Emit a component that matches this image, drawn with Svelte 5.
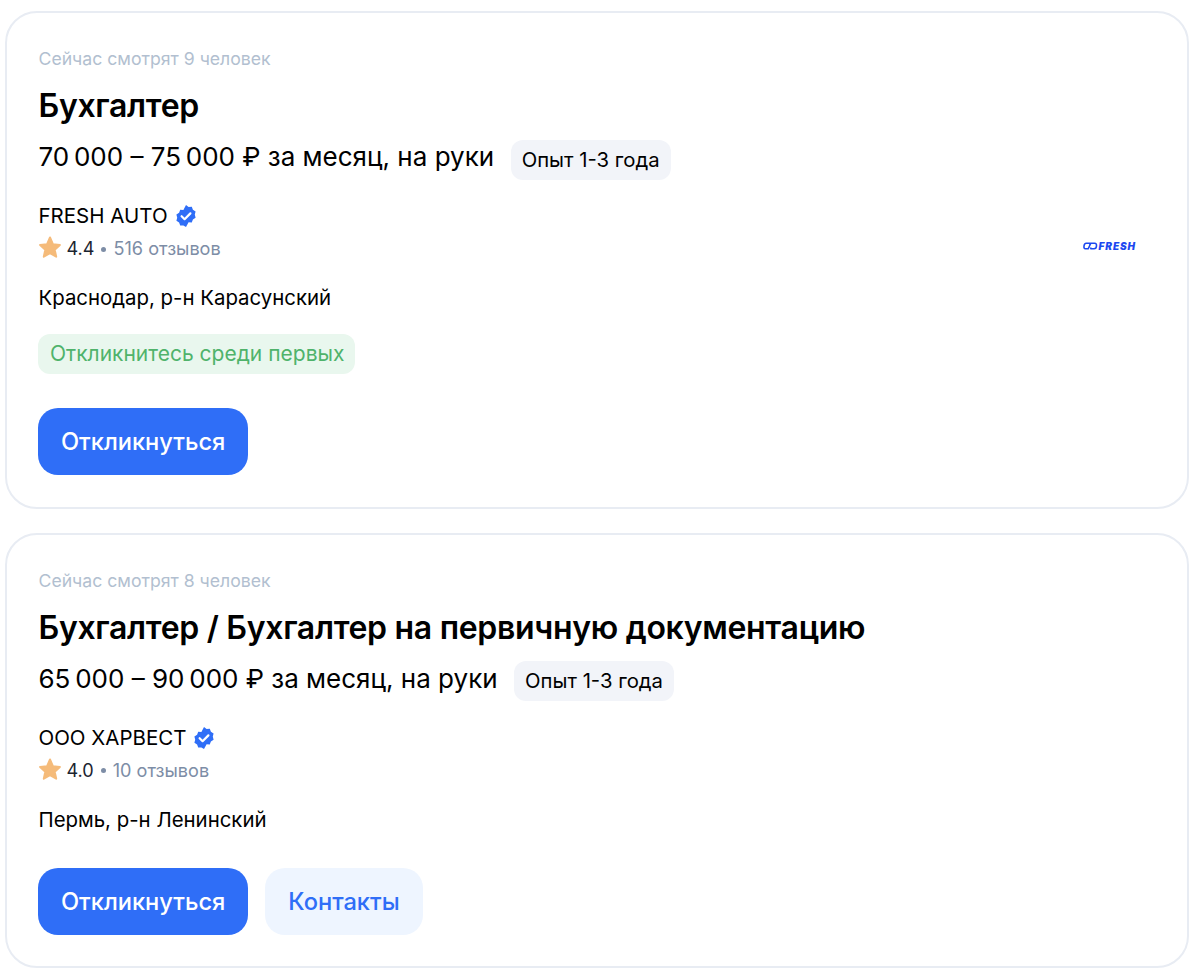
<script lang="ts">
  const vacancies = [
    {
      watching: "Сейчас смотрят 9 человек",
      title: "Бухгалтер",
      salary: "70\u2009000 – 75\u2009000 ₽ за месяц, на руки",
      company: "FRESH AUTO",
      rating: "4.4",
      reviews: "516 отзывов",
      city: "Краснодар, р-н Карасунский",
      first: true,
      logo: true,
      contacts: false,
    },
    {
      watching: "Сейчас смотрят 8 человек",
      title: "Бухгалтер / Бухгалтер на первичную документацию",
      salary: "65\u2009000 – 90\u2009000 ₽ за месяц, на руки",
      company: "ООО ХАРВЕСТ",
      rating: "4.0",
      reviews: "10 отзывов",
      city: "Пермь, р-н Ленинский",
      first: false,
      logo: false,
      contacts: true,
    },
  ];
</script>

<div class="list">
  {#each vacancies as v}
    <article class="card">
      <p class="watching">{v.watching}</p>
      <h2>{v.title}</h2>
      <div class="salary-row">
        <span class="salary">{v.salary}</span>
        <span class="exp">Опыт 1-3 года</span>
      </div>
      <div class="company-row">
        <div>
          <div class="company">
            <span>{v.company}</span>
            <svg class="badge" viewBox="0 0 24 24" width="24" height="24">
              <path
                fill="#2f6ef7"
                d="M12 1l2.6 1.9 3.2-.2 1.1 3 2.7 1.8-.8 3.1.8 3.1-2.7 1.8-1.1 3-3.2-.2L12 23l-2.6-1.6-3.2.2-1.1-3-2.7-1.8.8-3.1-.8-3.1 2.7-1.8 1.1-3 3.2.2z"
              />
              <path
                d="M7.6 12.2l3 3 5.8-5.8"
                fill="none"
                stroke="#fff"
                stroke-width="2.2"
                stroke-linecap="round"
                stroke-linejoin="round"
              />
            </svg>
          </div>
          <div class="rating">
            <svg class="star" viewBox="0 0 24 24" width="24" height="24">
              <path
                fill="#f5bb7a"
                stroke="#f5bb7a"
                stroke-width="2"
                stroke-linejoin="round"
                d="M12 1.500l2.900 6.700 7 .8-5.200 4.700 1.500 7L12 17.200l-6.200 3.500 1.500-7L2.100 9l7-.8z"
              />
            </svg>
            <span class="score">{v.rating}</span>
            <span class="dot"></span>
            <span class="reviews">{v.reviews}</span>
          </div>
        </div>
        {#if v.logo}
          <div class="logo">
            <svg viewBox="0 0 15 8" width="15" height="8">
              <path
                d="M7 2.500 6.500 1.200H3.200Q1.300 1.200 1 4T2.400 6.800H5.200L7.800 1.200H11.600Q13.700 1.200 13.500 4T11 6.800H8L7.500 5.500"
                fill="none"
                stroke="#1c48f0"
                stroke-width="1.600"
              />
            </svg>
            <span>FRESH</span>
          </div>
        {/if}
      </div>
      <p class="city">{v.city}</p>
      {#if v.first}
        <span class="first">Откликнитесь среди первых</span>
      {/if}
      <div class="actions">
        <button class="primary">Откликнуться</button>
        {#if v.contacts}
          <button class="secondary">Контакты</button>
        {/if}
      </div>
    </article>
  {/each}
</div>

<style>
  :global(body) {
    background: #fff;
  }

  .list {
    display: flex;
    flex-direction: column;
    gap: 24px;
    padding: 11px 11px 0 5px;
    font-family: Inter, "Noto Sans", sans-serif;
    color: #000;
  }

  .card {
    display: flex;
    flex-direction: column;
    align-items: flex-start;
    padding: 34px 31px 31.500px 31.500px;
    border: 2px solid #e8ecf3;
    border-radius: 32px;
  }

  p,
  h2 {
    margin: 0;
  }

  .watching {
    font-size: 17.650px;
    line-height: 24px;
    color: #b2bfd0;
  }

  h2 {
    margin-top: 15px;
    font-size: 32px;
    line-height: 40px;
    font-weight: 600;
    letter-spacing: -0.3px;
  }

  .salary-row {
    display: flex;
    align-items: center;
    gap: 16.500px;
    margin-top: 13.500px;
  }

  .salary {
    padding-bottom: 5px;
    font-size: 26px;
    line-height: 32px;
  }

  .exp {
    padding: 8px 11px;
    border-radius: 12px;
    background: #f2f4f9;
    font-size: 20.300px;
    line-height: 24px;
  }

  .company-row {
    align-self: stretch;
    display: flex;
    justify-content: space-between;
    align-items: flex-end;
    margin-top: 21.500px;
  }

  .company {
    display: flex;
    align-items: center;
    gap: 6px;
    font-size: 20.500px;
    line-height: 30px;
  }

  .rating {
    display: flex;
    align-items: center;
    margin-top: 3px;
    margin-left: -1px;
    height: 28px;
    font-size: 18.100px;
  }

  .star {
    margin-right: 5px;
  }

  .score {
    color: #1b2430;
  }

  .dot {
    width: 5px;
    height: 5px;
    margin: 2px 7px 0;
    border-radius: 50%;
    background: #7d8da6;
  }

  .reviews {
    color: #7d8da6;
  }

  .logo {
    display: flex;
    align-items: center;
    gap: 1px;
    margin: 0 20px 11px 0;
    color: #1c48f0;
    font-size: 10px;
    line-height: 10px;
    font-weight: 900;
    font-style: italic;
    letter-spacing: 0.9px;
  }

  .city {
    margin-top: 21px;
    font-size: 20.400px;
    line-height: 30px;
  }

  .first {
    margin: 21px 0 1px -0.500px;
    padding: 7px 10.500px 7px 12px;
    border-radius: 12px;
    background: #e9f7ee;
    color: #4fb36b;
    font-size: 21px;
    line-height: 26px;
  }

  .actions {
    display: flex;
    gap: 17px;
    margin-top: 33px;
    margin-left: -0.500px;
  }

  button {
    height: 67px;
    padding: 0 23px;
    border: none;
    border-radius: 20px;
    font: 500 23.650px Inter, "Noto Sans", sans-serif;
  }

  .primary {
    background: #2f6ef7;
    color: #fff;
  }

  .secondary {
    background: #eef5ff;
    color: #2f6ef7;
  }
</style>
